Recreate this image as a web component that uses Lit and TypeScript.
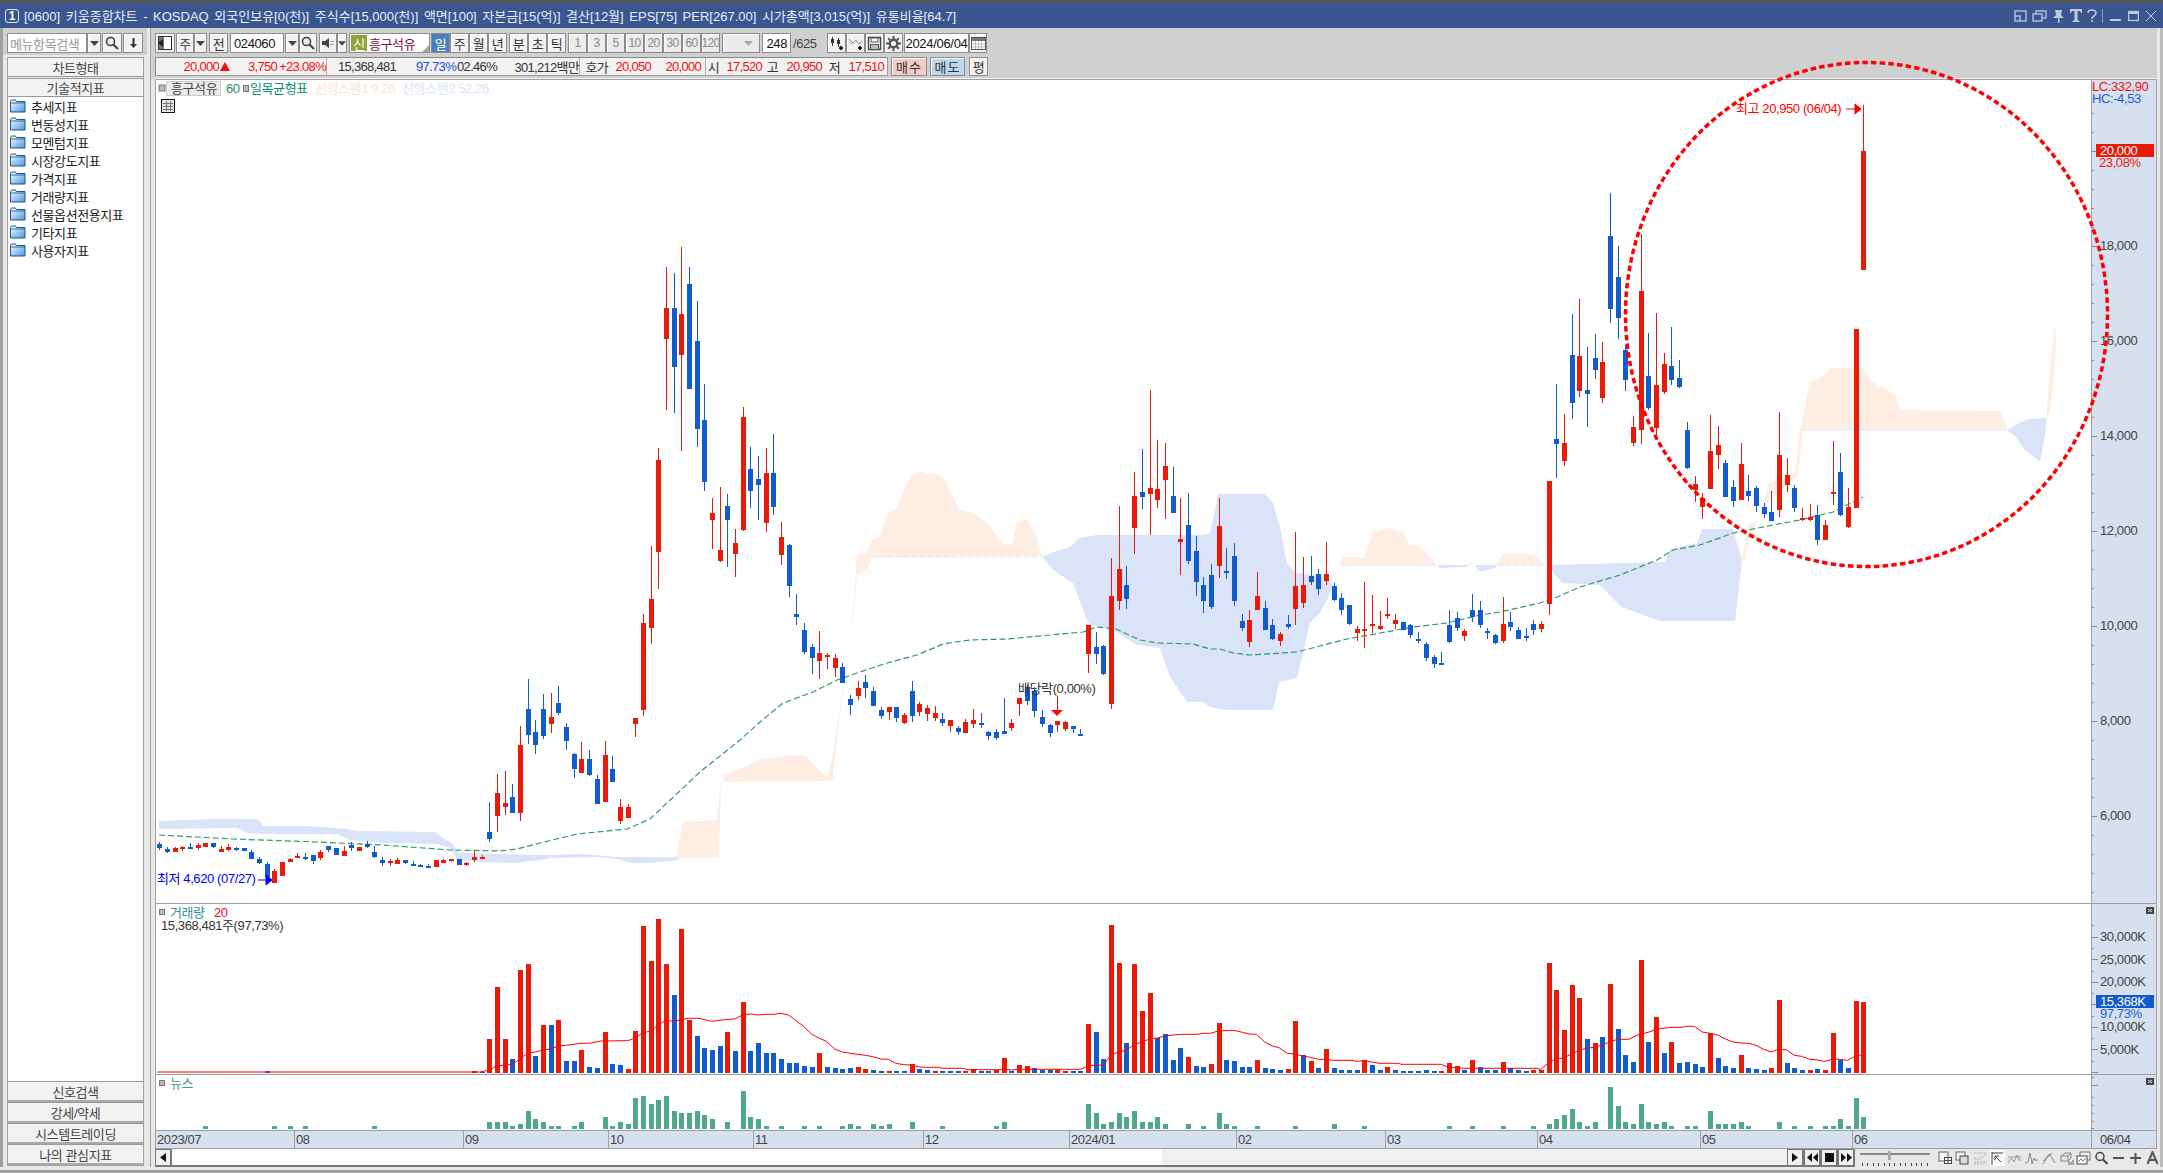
import { LitElement, html, svg, css } from "lit";
import { customElement } from "lit/decorators.js";

const RED = "#ea1a0a";
const BLUE = "#125bcc";
const X = (i: number) => Math.round(159.3 + 7.676 * i);

const C0 = `b 612 624 606 630;b 627 636 621 639;r 624 636 621 636;r 621 627 618 633;b 621 624 609 627;r 615 624 609 630;r 609 621 609 621;b 609 621 609 624;r 627 636 618 636;r 621 630 612 633;b 624 630 621 633;b 624 633 624 633;b 636 657 630 657;b 657 669 651 672;b 672 711 666 711;r 693 729 687 729;r 666 708 666 708;r 657 666 654 666;r 648 654 639 654;b 651 654 639 660;b 645 663 645 672;r 636 654 630 660;b 618 630 618 636;b 624 645 624 645;r 633 648 618 648;b 615 624 606 633;r 621 633 621 633;b 612 621 603 624;b 636 651 618 654;b 660 669 651 678;r 663 669 657 678;r 660 672 654 672;b 660 669 660 672;b 672 678 663 678;b 675 681 672 681;b 678 681 672 681;r 660 681 660 681;r 660 669 657 669;r 657 660 657 666;b 657 675 657 675;r 669 675 666 678;r 651 660 633 666;r 651 654 645 654;b 576 597 486 606;r 459 528 402 576;r 489 501 393 525;b 471 519 432 519;r 315 519 258 543;b 207 285 117 312;b 276 315 240 342;b 207 288 162 297;r 231 252 159 279;b 189 219 138 225;b 261 303 249 330;b 342 387 339 414;r 357 399 306 399;b 357 405 330 408;b 417 492 405 492;r 345 486 303 486;b 387 426 348 426;r 501 543 477 552;r 501 534 492 534;r 234 252 234 291`;
const C1 = `r 623 710 614 716;r 599 628 546 644;r 460 552 448 589;r 308 339 267 410;b 308 367 273 413;r 314 355 247 451;b 284 389 267 389;b 341 429 301 447;b 420 482 384 491;r 513 520 498 549;r 550 561 487 562;b 506 520 494 567;r 543 554 529 577;r 417 530 407 531;b 469 491 447 508;b 479 485 456 520;r 473 523 448 532;b 473 507 434 515;r 537 555 522 565;b 545 586 544 597;b 614 617 594 625;b 630 652 623 654;b 647 658 644 674;r 653 661 631 679;r 655 657 653 669;r 658 668 654 677;b 667 683 663 683;b 699 705 695 715;r 688 696 681 700;b 682 688 675 698;b 691 706 687 706;b 710 716 707 719;r 707 712 707 720;b 707 718 707 722;r 715 723 713 724;b 691 716 681 722;r 704 712 702 716;r 708 714 705 721;r 713 718 706 721;b 719 723 713 726;r 720 726 720 732;b 728 732 726 735;r 722 733 719 733;r 720 724 709 728;b 723 724 713 728;b 732 736 731 740;b 732 738 729 740;b 731 734 698 734;r 723 728 719 731;r 698 704 698 716;b 687 701 685 705;b 691 711 687 717;b 717 724 710 727;b 725 733 724 737;r 721 725 721 732;r 722 729 721 731;b 726 729 726 733;b 734 736 729 736;r 625 654 625 673;b 647 654 632 664;b 646 674 645 675;r 596 704 558 709;r 569 601 506 610;b 585 599 566 609;r 496 528 472 554;b 492 497 449 509;r 488 494 390 535;r 489 500 440 508;r 466 480 443 519;b 496 513 467 513;r 539 542 498 575;b 525 561 493 564;b 551 582 536 596;b 585 601 577 613;b 575 607 564 609;r 526 566 498 578;b 571 573 548 579;b 556 601 543 606;b 621 628 614 631;r 620 642 610 647;r 596 610 572 610;b 608 630 601 630;b 625 639 619 640;r 634 641 632 646;b 624 627 615 629;r 586 609 532 625;r 585 603 557 608;b 576 582 556 585;b 574 589 569 595;r 574 581 542 585;b 586 600 583 601;b 598 610 593 615;b 605 624 605 625;r 629 633 626 641;r 629 630 582 648;r 624 626 595 633;r 626 629 611 630;r 614 615 598 619;r 620 624 614 629;b 622 630 622 630;b 625 635 624 638;b 639 640 632 643;b 644 658 642 661;b 657 664 655 668;b 663 664 652 665;b 625 642 610 643;b 618 628 612 631;r 631 636 629 641;b 610 617 594 622;b 610 625 601 628;b 631 632 628 639;b 635 643 634 644;r 624 641 597 643;b 622 627 612 631;b 630 639 627 639;b 636 637 628 641;b 624 630 620 635;r 624 629 621 632;r 481 604 481 615;b 439 444 384 478;r 443 461 414 466;b 355 403 314 419;r 356 391 299 397;b 390 394 347 427;b 358 370 334 379;r 362 398 342 403;b 236 309 193 323;b 277 318 246 339;b 350 380 345 391;r 427 443 416 446;r 291 430 234 444;b 376 408 333 410;r 385 428 313 438;r 364 392 353 394;b 366 380 327 385;b 378 387 360 388;b 430 468 422 469;r 484 490 476 502;r 498 507 493 519;r 451 489 415 489;r 445 455 426 469;b 463 497 460 497;b 487 501 480 507;r 464 500 443 500;b 491 496 475 501;b 488 506 486 512;b 507 514 503 518;b 512 521 491 521;r 455 510 412 517;r 475 485 458 492;b 488 508 485 512;r 518 520 508 521;r 517 520 504 521;b 515 540 505 545;r 525 540 520 540;r 492 494 441 505;b 472 515 453 516;r 507 527 488 528;r 329 508 329 508;r 151 270 105 270`;

type Candle = { c: string; t: number; b: number; wt: number; wb: number };
const parseC = (s: string, f: (n: number) => number): Candle[] =>
  s.split(";").map((r) => {
    const p = r.trim().split(" ");
    return { c: p[0] === "r" ? RED : BLUE, t: f(+p[1]), b: f(+p[2]), wt: f(+p[3]), wb: f(+p[4]) };
  });
const CANDLES = [...parseC(C0, (n) => Math.round(640 + n / 3)), ...parseC(C1, (n) => n)];

const VOL = `402r 246r 402r 462b 195r 177r 453b 360r 360b 345r 468b 468b 435r 486b 489b 381r 477b 480b 492r 378r 63r 168r 42r 177r 270b 72r 345r 393b 429b 435b 423b 381r 438b 291r 438b 414b 444b 444b 462b 474b 474b 483b 486b 444r 486b 489b 492b 489b 486r 492r 495b 498b 498r 498b 498b 477r 492b 495b 498r 498b 498b 498b 498r 492r 498b 498b 495r 459r 498b 480r 483r 489b 495b 495b 492r 498r 498b 498b 357r 381b 462b 60r 174r 414b 177r 318r 264r 399b 387b 465b 429b 456r 483b 486b 477r 354r 465b 468b 486b 486b 465r 489b 492b 495b 492r 348r 450b 468r 489b 432r 489b 495b 495b 495b 465r 480b 495b 486r 495b 498b 498b 498b 495b 498b 498r 474r 483r 495b 465r 486b 495b 495b 471r 489b 495b 498b 495r 495r 174r 255r 375r 240r 279r 402b 414r 396b 237r 372b 450b 471b 165r 411b 336r 444b 411r 474b 471b 477b 486b 384r 459b 483b 489b 450r 489b 492b 495b 489r 285r 474b 489b 495b 495r 492b 495r 384r 465b 489b 288r 291r`
  .split(" ")
  .map((s, k) => ({ i: k + 43, t: 905 + parseInt(s) / 3, c: s.endsWith("r") ? RED : BLUE }));
VOL.unshift({ i: 14, t: 1071, c: BLUE }, { i: 41, t: 1071, c: RED }, { i: 42, t: 1072, c: BLUE });

const NEWS: [number, number][] = (
  `43:651 44:651 45:651 46:663 47:657 48:618 49:642 50:651 51:663 52:663 54:663 55:651 58:636 59:663 60:651 61:657 62:579 63:573 64:597 65:585 66:573 67:618 68:624 69:624 70:618 71:630 72:642 74:651 76:558 77:636 78:642 79:663 81:663 84:663 86:663 89:663 90:657 91:663 93:657 94:663 95:657 98:651 102:663 109:663 110:651 121:597 122:624 123:657 124:651 125:624 126:636 127:618 128:651 129:651 130:636 131:657 134:657 136:663 138:624 139:657 140:663 143:663 148:663 153:657 157:663 168:663 171:663 175:663 179:663 181:657 182:642 183:630 184:612 185:651 186:663 187:651 189:546 190:603 191:651 192:657 193:597 194:651 195:657 196:651 197:663 199:663 200:663 202:618 203:657 204:657 205:657 206:651 207:663 211:651 213:663 215:663 217:663 218:663 219:642 220:663 221:579 222:636 6:663 15:663 17:663 19:663 28:663`
)
  .split(" ")
  .map((s) => {
    const [a, b] = s.split(":");
    return [+a, 905 + +b / 3] as [number, number];
  });

const MA1 = `0,501 22,495 37,483 73,478 89,462 107,444 125,441 140,435 158,432 176,423 192,421 210,418 228,415 250,414 270,408 331,407 346,400 364,384 382,378 400,360 416,346 434,349 452,344 467,340 490,340 519,349 537,346 555,343 570,342 588,330 606,327 622,330 640,328 658,328 674,325 691,330 709,348 725,364 743,388 761,400 777,410 794,432 812,441 830,445 846,448 864,451 880,455 898,462 915,463 931,475 949,479 967,480 985,486 1001,487 1027,487 1036,490 1080,490 1095,494 1160,494 1173,492 1191,495 1207,493 1346,493 1361,483 1379,481 1397,480 1413,450 1431,441 1449,435 1464,420 1482,411 1500,402 1518,399 1534,393 1552,390 1568,388`;
const MA2 = `0,388 40,388 50,385 68,385 86,378 120,376 137,381 155,387 171,388 190,411 207,423 222,428 240,445 258,447 274,453 292,457 310,463 326,463 343,466 385,466 395,469 413,467 429,471 446,475 490,475 495,478 585,478 601,487 637,490 800,490 807,494 825,474 843,462 859,459 877,447 894,436 910,430 928,427 946,420 962,411 980,403 1005,403 1025,390 1049,382 1067,373 1082,370 1100,367 1125,367 1134,364 1152,364 1170,381 1186,385 1204,390 1222,402 1238,411 1256,414 1274,415 1290,421 1307,433 1325,441 1340,433 1358,434 1376,451 1392,454 1410,463 1428,465 1443,469 1461,463 1479,463 1495,466 1513,453 1525,450`;
const conv = (s: string, x0: number) =>
  s.split(" ").map((p) => {
    const [a, b] = p.split(",");
    return `${(x0 + +a / 2.24).toFixed(1)},${(905 + +b / 3).toFixed(1)}`;
  }).join(" ");
const VOLMA = `157,1072 478,1072 ` + conv(MA1, 480) + " " + conv(MA2, 1180);

const GREEN = `159,835 233,839 317,842 383,845 450,850 500,851 517,849 540,843 577,834 627,829 650,819 700,772 740,740 760,722 783,703 813,692 837,680 857,673 887,663 917,655 943,644 970,640 1007,639 1050,635 1083,632 1097,627 1116,629 1140,640 1157,643 1193,644 1210,649 1220,649 1233,653 1250,655 1297,652 1320,646 1347,639 1397,630 1413,627 1447,623 1480,615 1500,612 1540,603 1557,597 1580,587 1620,575 1657,560 1673,550 1700,545 1733,533 1773,525 1800,520 1833,512 1863,497`;

const CLOUD_BLUE = [
  `159,821 185,820 215,819 258,819 263,826 307,826 323,827 347,829 357,831 435,832 443,838 453,844 458,852 470,853 533,855 550,855 583,854 617,857 650,857 676,857 680,860 650,863 633,863 617,859 597,857 550,858 540,860 517,863 483,862 458,860 450,848 437,844 383,843 350,840 337,834 263,834 247,833 237,828 159,829`,
  `1042,556 1070,547 1080,538 1097,535 1203,535 1210,533 1215,510 1218,494 1265,494 1273,503 1280,527 1287,563 1295,573 1325,575 1333,585 1327,600 1320,613 1310,623 1303,653 1297,678 1279,682 1273,710 1227,710 1210,707 1203,702 1187,702 1170,677 1160,648 1137,645 1113,630 1090,625 1087,620 1073,583 1053,570`,
  `1437,565 1467,565 1467,567 1440,568`,
  `1475,565 1497,565 1495,568 1480,572`,
  `1550,565 1665,562 1670,549 1697,543 1702,529 1733,529 1738,547 1742,560 1735,621 1660,621 1621,607 1600,585 1562,583 1553,572`,
  `2007,430 2015,425 2028,419 2046,418 2046,430 2040,462 2025,450 2015,436`,
];
const CLOUD_ORANGE = [
  `676,858 683,822 717,820 720,790 725,775 760,760 790,755 805,756 827,778 832,760 840,707 850,647 857,555 867,553 872,540 880,537 888,513 897,507 907,483 913,475 920,471 927,474 937,474 945,480 953,497 960,510 973,513 987,523 997,535 1003,544 1012,544 1017,523 1026,519 1035,533 1042,556 872,557 867,570 857,575 850,647 845,680 840,713 837,740 833,781 721,782 719,858`,
  `1340,565 1342,557 1365,557 1372,533 1387,528 1403,532 1410,545 1418,545 1428,555 1437,565`,
  `1467,566 1471,562 1474,565`,
  `1497,565 1503,554 1533,554 1545,565`,
  `1742,560 1748,525 1760,520 1768,484 1795,473 1797,460 1800,430 1802,420 1810,382 1817,380 1832,368 1863,368 1870,380 1895,395 1900,410 2000,411 2007,428 2007,430 1803,430 1798,475 1770,500 1750,535 1745,560`,
  `2046,418 2051,360 2055,324 2056,340 2052,400 2048,418`,
];

const ICO = {
  panel: html`<svg width="16" height="16" viewBox="0 0 16 16"><rect x="1.5" y="1.5" width="13" height="13" fill="#fff" stroke="#333"/><rect x="2" y="2" width="5" height="12" fill="#777"/><path d="M1 8l5-4v8z" fill="#222"/></svg>`,
  down: html`<svg width="9" height="5" viewBox="0 0 9 5"><path d="M0 0h9L4.500 5z" fill="#444"/></svg>`,
  downLight: html`<svg width="9" height="5" viewBox="0 0 9 5"><path d="M0 0h9L4.500 5z" fill="#aaa"/></svg>`,
  search: html`<svg width="14" height="14" viewBox="0 0 14 14"><circle cx="5.500" cy="5.500" r="4" fill="#eef" stroke="#444" stroke-width="1.600"/><path d="M8.500 8.500L13 13" stroke="#444" stroke-width="2.200"/></svg>`,
  arrowDown: html`<svg width="9" height="12" viewBox="0 0 9 12"><path d="M4.500 1v8" stroke="#333" stroke-width="2"/><path d="M1 7h7l-3.500 4z" fill="#333"/></svg>`,
  speaker: html`<svg width="14" height="14" viewBox="0 0 14 14"><path d="M1 5h3l4-3v10l-4-3H1z" fill="#444"/><path d="M10 5v1M10 8v1M12 5v1M12 8v1" stroke="#555"/></svg>`,
  ico1: html`<svg width="16" height="15" viewBox="0 0 16 15"><path d="M3.500 1v9M9.500 2v9" stroke="#333"/><rect x="2" y="3" width="3" height="4" fill="#333"/><rect x="8" y="4" width="3" height="4" fill="#333"/><path d="M12 10v4M10 12h4" stroke="#222" stroke-width="2"/></svg>`,
  ico2: html`<svg width="16" height="15" viewBox="0 0 16 15"><path d="M1 3l4 4 3-3 3 4 3-3" fill="none" stroke="#888"/><path d="M1 6l4 3" stroke="#aaa" fill="none"/><path d="M12 10v4M10 12h4" stroke="#222" stroke-width="2"/></svg>`,
  disk: html`<svg width="15" height="15" viewBox="0 0 15 15"><path d="M1.500 1.500h12v12h-12z" fill="#f4f4f4" stroke="#444" stroke-width="1.400"/><rect x="4" y="2" width="7" height="4" fill="#fff" stroke="#555"/><rect x="3.500" y="8.500" width="8" height="5" fill="#bbb" stroke="#555"/></svg>`,
  gear: html`<svg width="15" height="15" viewBox="0 0 15 15"><circle cx="7.500" cy="7.500" r="3.800" fill="none" stroke="#555" stroke-width="2.400"/><path d="M7.500 0v3M7.500 12v3M0 7.500h3M12 7.500h3M2.200 2.200l2 2M10.800 10.800l2 2M12.800 2.200l-2 2M4.200 10.800l-2 2" stroke="#555" stroke-width="2"/></svg>`,
  cal: html`<svg width="15" height="13" viewBox="0 0 15 13"><rect x=".5" y=".5" width="14" height="12" fill="#fff" stroke="#555"/><rect x="1" y="1" width="13" height="3" fill="#777"/><path d="M1 7h13M1 10h13M4.500 4v8M7.500 4v8M10.500 4v8" stroke="#bbb"/></svg>`,
  folder: html`<svg width="16" height="14" viewBox="0 0 16 14"><defs><linearGradient id="fg" x1="0" y1="0" x2="1" y2="1"><stop offset="0" stop-color="#fff"/><stop offset="1" stop-color="#4b93dc"/></linearGradient></defs><path d="M.5 13V2.500l1-1.500h4l1 1.500h8.500V13z" fill="url(#fg)" stroke="#15588f"/><path d="M1 4h14" stroke="#15588f" stroke-width=".8"/></svg>`,
  tri: html`<svg class="tri" width="10" height="9" viewBox="0 0 10 9"><path d="M5 0l5 9H0z" fill="#f01010"/></svg>`,
};

const TB1 = ["일", "주", "월", "년"];
const TB2 = ["분", "초", "틱"];
const NUMS = ["1", "3", "5", "10", "20", "30", "60", "120"];
const FOLDERS = ["추세지표", "변동성지표", "모멘텀지표", "시장강도지표", "가격지표", "거래량지표", "선물옵션전용지표", "기타지표", "사용자지표"];
const BOTTOMS = ["신호검색", "강세/약세", "시스템트레이딩", "나의 관심지표"];

type Cell = { t: string; w: number; k: string; tri?: boolean };
const INFO: Cell[][] = [
  [ { t: "20,000", w: 74, k: "r", tri: true }, { t: "3,750", w: 47, k: "r" }, { t: "+23.08%", w: 49, k: "r" } ],
  [ { t: "15,368,481", w: 69, k: "" }, { t: "97.73%", w: 60, k: "b" }, { t: "02.46%", w: 41, k: "" }, { t: "301,212백만", w: 82, k: "" } ],
  [ { t: "호가", w: 28, k: "" }, { t: "20,050", w: 43, k: "r" }, { t: "20,000", w: 50, k: "r" }, { t: "", w: 4, k: "" } ],
  [ { t: "시", w: 13, k: "" }, { t: "17,520", w: 43, k: "r" }, { t: "고", w: 16, k: "" }, { t: "20,950", w: 44, k: "r" }, { t: "저", w: 18, k: "" }, { t: "17,510", w: 44, k: "r" } ],
];

const DATES = [
  { t: "2023/07", x: 156 }, { t: "08", x: 294 }, { t: "09", x: 463 }, { t: "10", x: 608 }, { t: "11", x: 753 },
  { t: "12", x: 923 }, { t: "2024/01", x: 1069 }, { t: "02", x: 1236 }, { t: "03", x: 1385 }, { t: "04", x: 1537 },
  { t: "05", x: 1700 }, { t: "06", x: 1852 },
];

const range = (a: number, b: number, s: number) => {
  const o: number[] = [];
  for (let v = a; v <= b + 0.01; v += s) o.push(v);
  return o;
};

@customElement("app-root")
export class AppRoot extends LitElement {
  static styles = css`
    :host {
      display: block;
      position: relative;
      width: 2163px;
      height: 1173px;
      overflow: hidden;
      font-family: "Liberation Sans", "Noto Sans CJK KR", sans-serif;
      font-size: 13px;
      letter-spacing: -0.4px;
      color: #333;
      background: #e8e8e8;
    }
    .top { height: 3px; background: #555; }
    .title {
      height: 25px;
      background: #3a5690;
      color: #e9edf5;
      display: flex;
      align-items: center;
      padding: 0 7px 0 5px;
      white-space: nowrap;
    }
    .num {
      width: 14px; height: 14px; border: 1.5px solid #dfe5f0; border-radius: 3px; box-sizing: border-box;
      display: flex; align-items: center; justify-content: center; font-size: 12px; font-weight: bold; margin-right: 5px; color: #fff;
    }
    .ttext { flex: 1; word-spacing: 2px; letter-spacing: 0; }
    .wctl { display: flex; align-items: center; gap: 5px; color: #c0c8da; }
    .wctl svg { display: block; }
    .body {
      display: flex;
      height: 1139px;
      border-left: 3px solid #a0a0a0;
      border-right: 3px solid #bcbcbc;
      padding-right: 3px;
    }
    .left {
      width: 147px;
      border-right: 1px solid #a0a0a0;
      display: flex;
      flex-direction: column;
      flex: none;
    }
    .lsearch {
      height: 22px;
      padding: 5px 0 0 4px;
      background: #d0d0d0;
      display: flex;
      margin-right: 3px;
    }
    .btn {
      box-sizing: border-box;
      height: 20px;
      background: #f2f2f2;
      border: 1px solid #8c8c8c;
      box-shadow: inset 1px 1px 0 #fff;
      display: flex;
      align-items: center;
      justify-content: center;
      flex: none;
      white-space: nowrap;
    }
    .lbox { color: #999; background: #fff; width: 80px; justify-content: flex-start; padding-left: 2px; }
    .lpanel {
      flex: 1;
      margin: 2px 6px 1px 4px;
      display: flex;
      flex-direction: column;
      width: 137px;
      box-sizing: border-box;
      border: 1px solid #a0a0a0;
      border-top: 0;
    }
    .lhead {
      height: 20px;
      box-sizing: border-box;
      background: #f2f2f2;
      border-top: 1px solid #999;
      border-bottom: 1px solid #999;
      margin-bottom: 1px;
      display: flex;
      align-items: center;
      justify-content: center;
      color: #444;
      flex: none;
    }
    .lhead.second { height: 19px; margin-bottom: 0; }
    .list { flex: 1; background: #fff; padding-top: 0; }
    .item { height: 18px; display: flex; align-items: center; padding-left: 2px; gap: 5px; color: #222; }
    .item svg { flex: none; }
    .lfoot {
      height: 21px;
      box-sizing: border-box;
      background: #f2f2f2;
      border-top: 1px solid #999;
      border-bottom: 2px solid #aaa;
      display: flex;
      align-items: center;
      justify-content: center;
      color: #444;
    }
    .main { width: 2006px; padding-left: 4px; box-sizing: border-box; display: flex; flex-direction: column; flex: none; }
    .tools { height: 51px; background: #d0d0d0; margin-left: -4px; padding-left: 4px; width: 2006px; box-sizing: border-box; }
    .row1 { display: flex; padding-top: 5px; height: 20px; }
    .row2 { display: flex; margin-top: 4px; height: 19px; }
    .group { display: flex; }
    .ml1 { margin-left: 1px; }
    .ml2 { margin-left: 2px; }
    .ml9 { margin-left: 9px; }
    .w13 { width: 13px; }
    .w14 { width: 14px; }
    .w10 { width: 10px; }
    .w18 { width: 18px; }
    .w19 { width: 19px; }
    .w20 { width: 20px; }
    .w38 { width: 38px; justify-content: flex-end; padding-right: 6px; }
    .input { background: #fff; justify-content: flex-start; padding-left: 3px; color: #111; box-shadow: none; }
    .code { width: 54px; }
    .name { width: 81px; padding-left: 0; color: #7a0e3e; gap: 2px; font-size: 13px; position: relative; }
    .sin { background: #93a135; color: #fff; width: 16px; height: 16px; display: flex; align-items: center; justify-content: center; margin-left: 1px; }
    .corner { margin-left: auto; width: 0; height: 0; border-left: 7px solid transparent; border-bottom: 7px solid #aaa; align-self: flex-end; }
    .on { background: #4a80c0; color: #fff; box-shadow: none; }
    .light { color: #888; background: #ececec; }
    .tnum { font-size: 12px; letter-spacing: -0.7px; }
    .cnt { width: 29px; justify-content: flex-end; padding-right: 3px; }
    .slash { width: 25px; display: flex; align-items: center; color: #444; margin-left: 2px; }
    .date { width: 65px; justify-content: center; padding: 0; letter-spacing: -0.3px; }
    .info { display: flex; width: 733px; height: 19px; background: #f2f2f2; border: 1px solid #9c9c9c; box-sizing: border-box; border-left-color: #888; border-top-color: #888; }
    .seg { display: flex; border-right: 1px solid #b0b0b0; box-sizing: border-box; white-space: nowrap; }
    .seg:last-child { border-right: 0; }
    .cell { flex: none; display: flex; align-items: center; justify-content: flex-end; height: 17px; letter-spacing: -0.7px; gap: 1px; }
    .tri { flex: none; }
    .r { color: #f01010; }
    .b { color: #1a50d0; }
    .buy { width: 36px; background: #f4cbc6; margin-left: 3px; height: 19px; letter-spacing: 1px; }
    .sell { width: 35px; background: #bdd7f0; margin-left: 3px; height: 19px; letter-spacing: 1px; }
    .avg { width: 19px; margin-left: 4px; height: 19px; }
    .chart { width: 2002px; border: 1px solid #a0a0a0; border-bottom: 0; box-sizing: border-box; box-shadow: 0 -1px 0 #f4f4f4; background: #fff; }
    .pane { display: flex; border-bottom: 1px solid #a0a0a0; box-sizing: content-box; }
    .pane svg { display: block; flex: none; }
    .h823 { height: 823px; }
    .h170 { height: 170px; }
    .h55 { height: 55px; }
    .axis { background: #d6e0ee; border-left: 1px solid #a0a0a0; width: 64px; }
    svg text { font-family: "Liberation Sans", "Noto Sans CJK KR", sans-serif; font-size: 13px; letter-spacing: -0.4px; }
    .dates { display: flex; height: 17px; background: #d6e0ee; border-bottom: 1px solid #a0a0a0; }
    .dseg { box-sizing: border-box; border-left: 1px solid #a0a0a0; padding-left: 1px; line-height: 17px; color: #444; flex: none; }
    .dseg:first-child { border-left: 0; }
    .dend { border-left: 1px solid #a0a0a0; padding-left: 8px; line-height: 17px; color: #444; box-sizing: border-box; flex: none; width: 65px; }
    .scroll { display: flex; height: 18px; width: 2002px; align-items: stretch; }
    .sbtn { width: 17px; height: 18px; box-sizing: border-box; background: #f0f0f0; border: 1px solid #777; border-right-width: 2px; border-bottom-width: 2px; display: flex; align-items: center; justify-content: center; flex: none; }
    .track { flex: none; width: 1615px; box-sizing: border-box; border-bottom: 2px solid #777; background: linear-gradient(90deg, #fff 0 990px, #f0f0f0 990px); }
    .slider { width: 82px; display: block; flex: none; }
    .tools2 { display: flex; align-items: center; gap: 2.300px; padding-left: 1px; flex: 1; }
    .tools2 svg { display: block; flex: none; }
    .selected { background: #fafafa; }
    .foot1 { height: 3px; background: #e8e8e8; }
    .foot2 { height: 3px; background: #a0a0a0; }
    .over { position: absolute; left: 0; top: 0; pointer-events: none; z-index: 5; }
  `;

  private plot() {
    return html`<svg width="1935" height="823" viewBox="156 80 1935 823">
      ${CLOUD_ORANGE.map((p) => svg`<polygon points=${p} fill="#fdede3"/>`)}
      ${CLOUD_BLUE.map((p) => svg`<polygon points=${p} fill="#dbe3f9"/>`)}
      <path d="M872 557H1042M1803 430H2007M1342 565H1437M1497 565H1550" stroke="#dbe3f9" stroke-dasharray="6 2" fill="none"/>
      <polyline points=${GREEN} fill="none" stroke="#2e9a68" stroke-width="1.200" stroke-dasharray="6 3"/>
      <g shape-rendering="crispEdges">
        ${CANDLES.map((k, i) => {
          const x = X(i);
          return svg`<rect x=${x} y=${k.wt} width="1" height=${Math.max(1, k.wb - k.wt)} fill=${k.c}/>
          <rect x=${x - 2} y=${k.t} width="5" height=${Math.max(2, k.b - k.t)} fill=${k.c}/>`;
        })}
      </g>
      <rect x="159" y="85" width="6" height="6" fill="#bbb" stroke="#777"/>
      <rect x="166.500" y="81.500" width="54" height="14" fill="#ececec" stroke="#ccc"/>
      <text x="171" y="93" fill="#444">흥구석유</text>
      <text x="226" y="93" fill="#2e8b6a">60</text>
      <rect x="243.500" y="85.500" width="5" height="6" fill="#bbb" stroke="#777"/>
      <text x="250" y="93" fill="#0a8f70">일목균형표</text>
      <text x="315" y="93" fill="#fbe3d6">선행스팬1 9,26</text>
      <text x="402" y="93" fill="#dde4f8">선행스팬2 52,26</text>
      <g shape-rendering="crispEdges"><rect x="161.500" y="99.500" width="13" height="13" fill="#e8e8e8" stroke="#111"/><path d="M163 103h10M163 106h10M163 109h10M166.500 101v10M170.500 101v10" stroke="#777"/></g>
      <text x="1736" y="113" fill="#f00">최고 20,950 (06/04)</text>
      <path d="M1846 109h10M1855 104l6 5-6 5z" stroke="#f00" fill="#f00"/>
      <text x="157" y="883" fill="#0000f0">최저 4,620 (07/27)</text>
      <path d="M258 880h10M266 875l6 5-6 5z" stroke="#00f" fill="#00f"/>
      <rect x="1057" y="696" width="1" height="14" fill="#f01010"/>
      <path d="M1051 710h12l-6 6z" fill="#f01010"/>
      <text x="1018" y="693" fill="#333">배당락(0,00%)</text>
    </svg>`;
  }

  private axisMain() {
    const labels = [["18,000", 246], ["16,000", 341], ["14,000", 436], ["12,000", 531], ["10,000", 626], ["8,000", 721], ["6,000", 816]] as [string, number][];
    return html`<svg class="axis" width="64" height="823" viewBox="2092 80 64 823">
      <g shape-rendering="crispEdges">
        ${range(113, 899, 19).map((y) => svg`<rect x="2092" y=${y} width=${(y - 151) % 95 === 0 ? 5 : 2} height="1" fill="#888"/>`)}
      </g>
      <text x="2092" y="91" fill="#f01010">LC:332,90</text>
      <text x="2092" y="103" fill="#1a60d8">HC:-4,53</text>
      <rect x="2096" y="144" width="58" height="13" fill=${RED}/>
      <text x="2100" y="155" fill="#fff">20,000</text>
      <text x="2099" y="167" fill="${RED}">23,08%</text>
      ${labels.map(([t, y]) => svg`<text x="2100" y=${y + 4} fill="#444">${t}</text>`)}
    </svg>`;
  }

  private closeBtn(y: number) {
    return svg`<rect x="2146" y=${y} width="8" height="7" fill="#444"/><path d=${`M2148 ${y + 2}l4 3M2152 ${y + 2}l-4 3`} stroke="#ddd" fill="none"/>`;
  }

  private volume() {
    return html`<svg width="1935" height="170" viewBox="156 904 1935 170">
      <g shape-rendering="crispEdges">
        ${VOL.map((v) => svg`<rect x=${X(v.i) - 2} y=${v.t} width="5" height=${1073 - v.t} fill=${v.c}/>`)}
      </g>
      <polyline points=${VOLMA} fill="none" stroke="#f00" stroke-width="1"/>
      <rect x="159.500" y="909.500" width="5" height="5" fill="#bbb" stroke="#777"/>
      <text x="170" y="917" fill="#2a8f90">거래량</text>
      <text x="214" y="917" fill="#f01010">20</text>
      <text x="161" y="930" fill="#333">15,368,481주(97,73%)</text>
    </svg>`;
  }

  private axisVol() {
    const lab = [["30,000K", 937], ["25,000K", 959.5], ["20,000K", 982], ["10,000K", 1027], ["5,000K", 1049.5]] as [string, number][];
    return html`<svg class="axis" width="64" height="170" viewBox="2092 904 64 170">
      <g shape-rendering="crispEdges">
        ${[937, 959, 982, 1004, 1027, 1049, 1072].map((y) => svg`<rect x="2092" y=${y} width="6" height="1" fill="#888"/>`)}
        ${[925, 948, 971, 993, 1016, 1038, 1061].map((y) => svg`<rect x="2092" y=${y} width="2" height="1" fill="#888"/>`)}
      </g>
      ${this.closeBtn(907)}
      ${lab.map(([t, y]) => svg`<text x="2100" y=${y + 4} fill="#444">${t}</text>`)}
      <rect x="2096" y="995" width="58" height="13" fill=${BLUE}/>
      <text x="2100" y="1006" fill="#fff">15,368K</text>
      <text x="2100" y="1018" fill="#1a60d8">97,73%</text>
    </svg>`;
  }

  private news() {
    return html`<svg width="1935" height="55" viewBox="156 1075 1935 55">
      <g shape-rendering="crispEdges">
        ${NEWS.map(([i, t]) => svg`<rect x=${X(i) - 2} y=${t} width="5" height=${1129 - t} fill="#4fa88a"/>`)}
      </g>
      <rect x="159.500" y="1080.500" width="5" height="5" fill="#bbb" stroke="#777"/>
      <text x="170" y="1088" fill="#3fa080">뉴스</text>
    </svg>`;
  }

  private axisNews() {
    return html`<svg class="axis" width="64" height="55" viewBox="2092 1075 64 55">
      <g shape-rendering="crispEdges">
        ${[1077, 1097, 1105, 1113, 1121, 1128].map((y) => svg`<rect x="2092" y=${y} width="2" height="1" fill="#888"/>`)}
        <rect x="2092" y="1085" width="6" height="1" fill="#888"/>
      </g>
      ${this.closeBtn(1078)}
    </svg>`;
  }

  private dates() {
    return html`<div class="dates">
      ${DATES.map((d, i) => {
        const next = i < DATES.length - 1 ? DATES[i + 1].x : 2091;
        return html`<div class="dseg" style="width:${next - d.x}px">${d.t}</div>`;
      })}
      <div class="dend">06/04</div>
    </div>`;
  }

  private bottomIcons() {
    const S = "#666";
    const ic = (b: unknown, w = 15) => html`<svg width=${w} height="14" viewBox="0 0 15 14" fill="none" stroke=${S}>${b}</svg>`;
    return html`<div class="tools2">
      ${ic(svg`<rect x="1" y="1" width="9" height="9" fill="#f4f4f4"/><rect x="6.500" y="6.500" width="7" height="6" fill="#fff" stroke="#444"/><path d="M10 7v5M7 9.500h6" stroke="#444"/>`)}
      ${ic(svg`<rect x="1" y="1" width="9" height="8" fill="#f4f4f4"/><rect x="5" y="5" width="8" height="8" fill="#ddd" stroke="#444"/>`)}
      ${ic(svg`<path d="M1 11h13M1 7l4 2 4-3 5-4" stroke="#aaa" stroke-dasharray="2 1"/><path d="M1 2h13M1 13h13" stroke="#bbb" stroke-dasharray="2 1"/>`)}
      <svg class="selected" width="15" height="16" viewBox="0 0 15 16"><path d="M2 2v13M2 3h11" stroke="#444" fill="none"/><path d="M5 6l6 6M5 6h4M5 6v4" stroke="#444" fill="none"/></svg>
      ${ic(svg`<path d="M1 12l3-5 3 4 3-7 2 5h3M1 6h13" stroke="#999"/>`)}
      ${ic(svg`<path d="M1 12l3-1 2-9 2 11 2-6 1 2h3" stroke="#888"/>`)}
      ${ic(svg`<path d="M1 13l6-10 3 4 3 5M1 10l9-8" stroke="#888"/>`)}
      ${ic(svg`<path d="M2 5l4-3h6v5l-3 3H2zM2 5h7v5M9 5l3-3" stroke="#888"/><path d="M10 10v4M12 11v3M14 9v5" stroke="#666"/>`)}
      ${ic(svg`<rect x="4" y="1" width="10" height="8" fill="#eee" stroke="#777"/><rect x="1" y="5" width="10" height="8" fill="#fff" stroke="#444"/><path d="M2 11l3-3 2 2 3-3" stroke="#777"/>`)}
      ${ic(svg`<circle cx="6" cy="5.500" r="4" stroke="#444" stroke-width="1.500"/><path d="M9 8.500l4.500 4.500" stroke="#444" stroke-width="2"/>`)}
      ${ic(svg`<path d="M2 7h11" stroke="#555" stroke-width="2"/>`)}
      ${ic(svg`<path d="M2 7h11M7.500 2v11" stroke="#555" stroke-width="2"/>`)}
      <svg width="13" height="14" viewBox="0 0 13 14"><path d="M1.500 13L6.500 1l5 12M3.500 9h6" stroke="#555" stroke-width="2" fill="none"/></svg>
    </div>`;
  }

  render() {
    return html`
      <div class="top"></div>
      <div class="title">
        <div class="num">1</div>
        <div class="ttext">[0600] 키움종합차트 - KOSDAQ 외국인보유[0(천)] 주식수[15,000(천)] 액면[100] 자본금[15(억)] 결산[12월] EPS[75] PER[267.00] 시가총액[3,015(억)] 유통비율[64.7]</div>
        <div class="wctl">
          <svg width="13" height="12" viewBox="0 0 13 12" fill="none" stroke="#c0c8da" stroke-width="1.300"><rect x="1" y="1" width="11" height="10"/><path d="M1 6h5v5" /></svg>
          <svg width="15" height="12" viewBox="0 0 15 12" fill="none" stroke="#c0c8da" stroke-width="1.300"><rect x="4" y="1" width="10" height="7"/><rect x="1" y="4" width="9" height="7" fill="#3a5690"/></svg>
          <svg width="13" height="14" viewBox="0 0 13 14" fill="#c0c8da"><path d="M3 1h7l-1 5 3 3H1l3-3zM6 9h1.500v5H6z"/></svg>
          <svg width="12" height="13" viewBox="0 0 12 13" fill="#c0c8da"><path d="M0 0h12v4h-1l-1-2H7.500v9l2 1v1h-7v-1l2-1V2H2L1 4H0z"/></svg>
          <svg width="10" height="13" viewBox="0 0 10 13" fill="none" stroke="#c0c8da" stroke-width="1.600"><path d="M1 4c0-4 8-4 8 0 0 3-4 3-4 6"/><path d="M5 11v2"/></svg>
          <svg width="1" height="14"><rect width="1" height="14" fill="#8c9ab8"/></svg>
          <svg class="ml2" width="11" height="12" viewBox="0 0 11 12"><rect y="9" width="11" height="2" fill="#c0c8da"/></svg>
          <svg class="ml2" width="11" height="12" viewBox="0 0 11 12" fill="none" stroke="#c0c8da" stroke-width="1.300"><rect x=".7" y="1.500" width="9.600" height="9"/><path d="M1 3h9" stroke-width="2"/></svg>
          <svg class="ml2" width="10" height="10" viewBox="0 0 10 10" stroke="#c0c8da"><path d="M0 0l10 10M10 0L0 10"/></svg>
        </div>
      </div>
      <div class="body">
        <div class="left">
          <div class="lsearch">
            <div class="btn lbox">메뉴항목검색</div>
            <div class="btn w14">${ICO.down}</div>
            <div class="btn w20 ml1">${ICO.search}</div>
            <div class="btn w20 ml1">${ICO.arrowDown}</div>
          </div>
          <div class="lpanel">
            <div class="lhead">차트형태</div>
            <div class="lhead second">기술적지표</div>
            <div class="list">
              ${FOLDERS.map((f) => html`<div class="item">${ICO.folder}<span>${f}</span></div>`)}
            </div>
            ${BOTTOMS.map((b) => html`<div class="lfoot">${b}</div>`)}
          </div>
        </div>
        <div class="main">
          <div class="tools">
            <div class="row1">
              <div class="btn w20">${ICO.panel}</div>
              <div class="btn w18 ml1">주</div>
              <div class="btn w13">${ICO.down}</div>
              <div class="btn w19 ml2">전</div>
              <div class="btn input code ml2">024060</div>
              <div class="btn w14 ml1">${ICO.down}</div>
              <div class="btn w18">${ICO.search}</div>
              <div class="btn w18 ml2">${ICO.speaker}</div>
              <div class="btn w10">${ICO.down}</div>
              <div class="btn input name ml2"><span class="sin">신</span><span>흥구석유</span><span class="corner"></span></div>
              <div class="group ml1">
                ${TB1.map((t, i) => html`<div class="btn w19 ${i === 0 ? "on" : ""}">${t}</div>`)}
              </div>
              <div class="group ml2">
                ${TB2.map((t) => html`<div class="btn w19">${t}</div>`)}
              </div>
              <div class="group ml2">
                ${NUMS.map((t) => html`<div class="btn w19 light tnum">${t}</div>`)}
              </div>
              <div class="btn w38 ml2 light">${ICO.downLight}</div>
              <div class="btn input cnt ml2">248</div>
              <div class="slash">/625</div>
              <div class="group ml9">
                <div class="btn w19">${ICO.ico1}</div>
                <div class="btn w19">${ICO.ico2}</div>
                <div class="btn w19">${ICO.disk}</div>
                <div class="btn w19">${ICO.gear}</div>
              </div>
              <div class="btn input date ml1">2024/06/04</div>
              <div class="btn w18">${ICO.cal}</div>
            </div>
            <div class="row2">
              <div class="info">
                ${INFO.map((seg) => html`<div class="seg">
                  ${seg.map((c) => html`<div class="cell ${c.k}" style="width:${c.w}px">${c.t}${c.tri ? ICO.tri : ""}</div>`)}
                </div>`)}
              </div>
              <div class="btn buy">매수</div>
              <div class="btn sell">매도</div>
              <div class="btn avg">평</div>
            </div>
          </div>
          <div class="chart">
            <div class="pane h823">${this.plot()}${this.axisMain()}</div>
            <div class="pane h170">${this.volume()}${this.axisVol()}</div>
            <div class="pane h55">${this.news()}${this.axisNews()}</div>
            ${this.dates()}
          </div>
          <div class="scroll">
            <div class="sbtn"><svg width="6" height="9"><path d="M6 0v9L0 4.500z" fill="#111"/></svg></div>
            <div class="track"></div>
            <div class="sbtn"><svg width="6" height="9"><path d="M0 0v9l6-4.500z" fill="#111"/></svg></div>
            <div class="sbtn"><svg width="11" height="9"><path d="M5 0v9L0 4.500zM11 0v9L6 4.500z" fill="#111"/></svg></div>
            <div class="sbtn"><svg width="9" height="9"><rect width="9" height="9" fill="#111"/></svg></div>
            <div class="sbtn"><svg width="11" height="9"><path d="M0 0v9l5-4.500zM6 0v9l5-4.500z" fill="#111"/></svg></div>
            <svg class="slider" width="82" height="18" viewBox="0 0 82 18" shape-rendering="crispEdges">
              <rect x="5" y="4" width="70" height="2" fill="#888"/><rect x="33" y="2" width="3" height="9" fill="#aaa"/>
              ${range(7, 72, 5.4).map((x) => svg`<rect x=${Math.round(x)} y="14" width="1" height="3" fill="#444"/>`)}
            </svg>
            ${this.bottomIcons()}
          </div>
        </div>
      </div>
      <div class="foot1"></div>
      <div class="foot2"></div>
      <svg class="over" width="2163" height="1173" viewBox="0 0 2163 1173">
        <ellipse cx="1866.500" cy="314.500" rx="241" ry="252" fill="none" stroke="#ff0000" stroke-width="3.500" stroke-dasharray="5.500 3.200"/>
      </svg>
    `;
  }
}
